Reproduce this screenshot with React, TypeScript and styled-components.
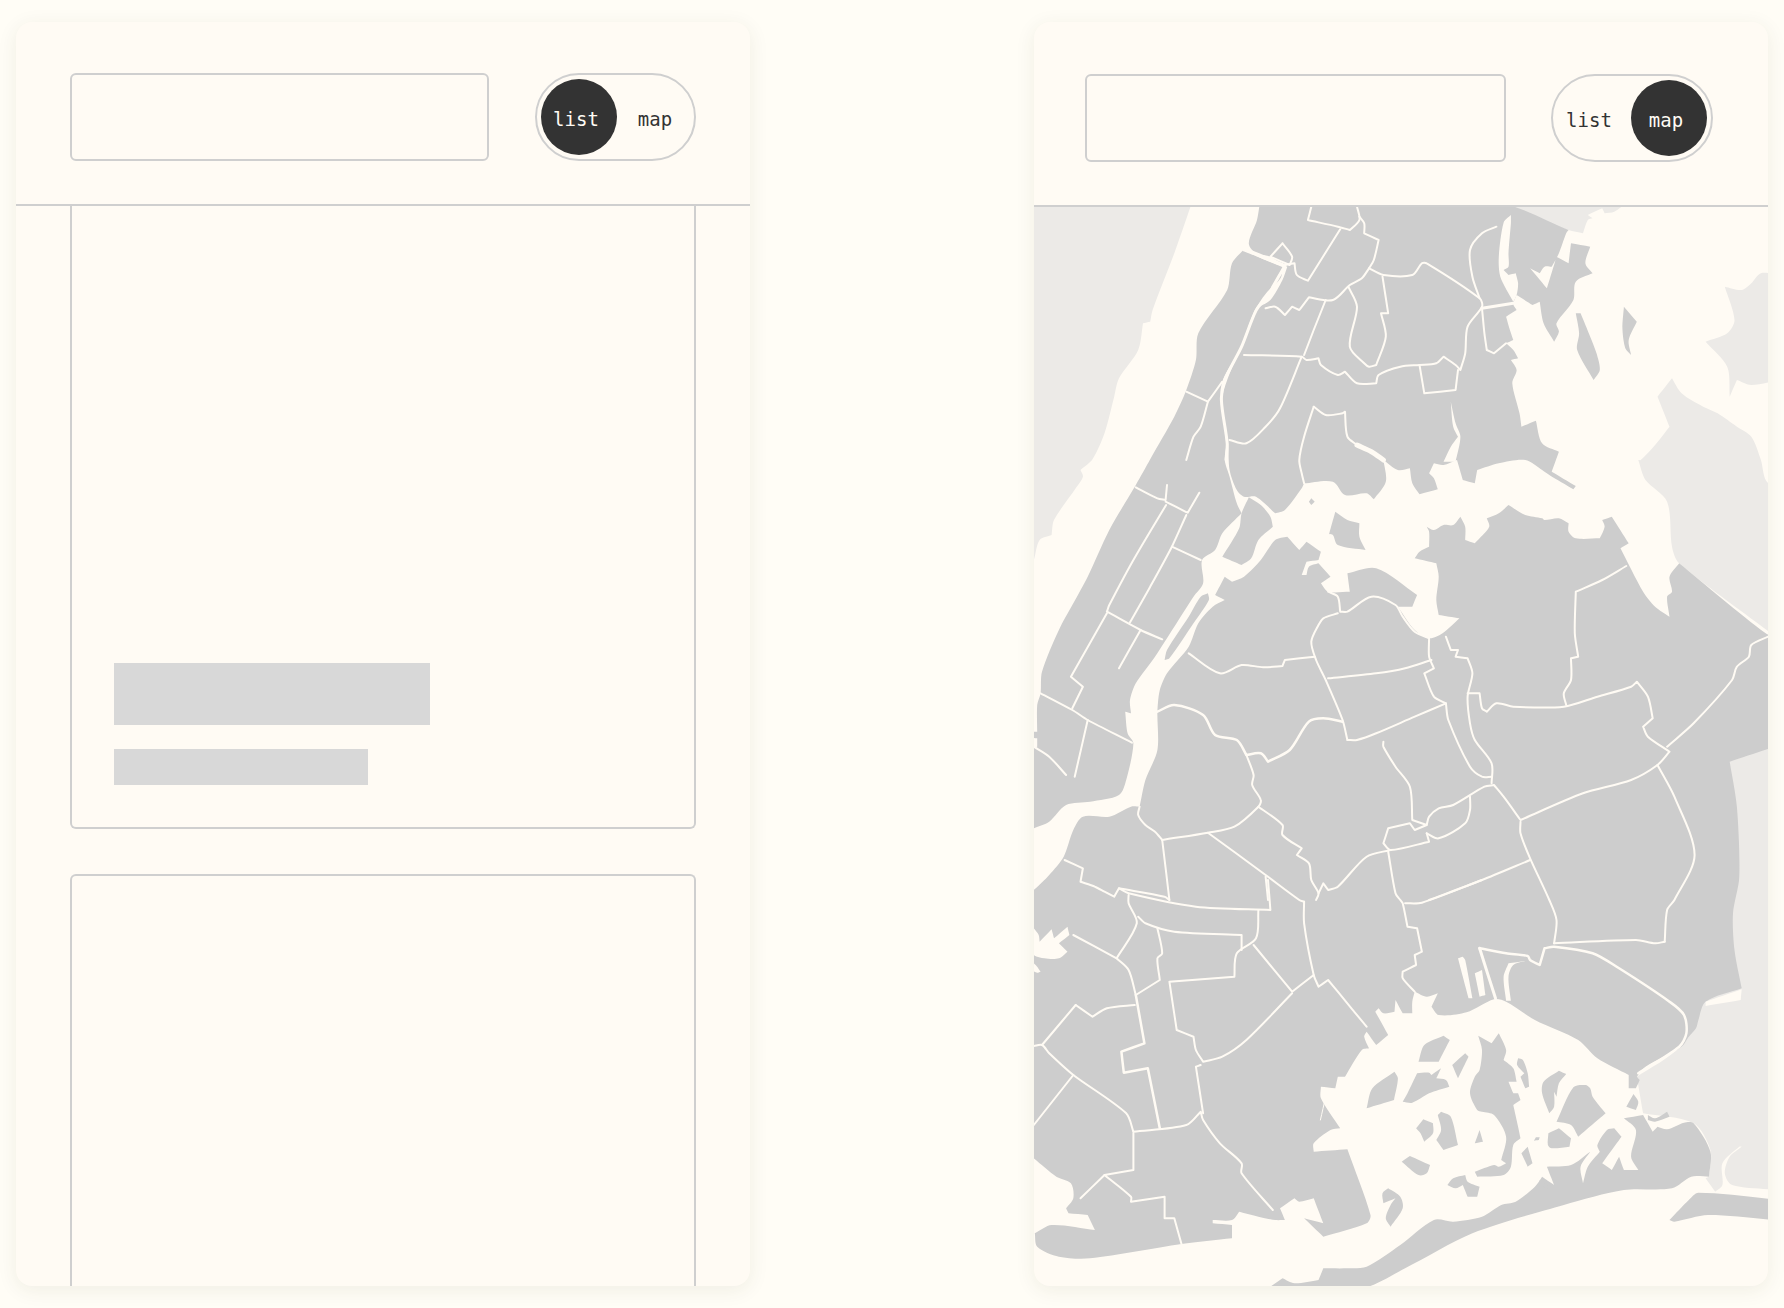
import React from "react";
import styled, { createGlobalStyle } from "styled-components";

const GlobalStyle = createGlobalStyle`
  html, body { margin: 0; padding: 0; background: #fffdf6; }
  #root { width: 1784px; height: 1308px; overflow: hidden; }
`;

const BG = "#fffbf4";
const LINE = "#cfcfcf";

const Page = styled.main`
  width: 1784px;
  height: 1308px;
  box-sizing: border-box;
  padding: 22px 16px;
  display: flex;
  justify-content: space-between;
  background: #fffdf6;
`;

const Phone = styled.section`
  width: 734px;
  height: 1264px;
  display: flex;
  flex-direction: column;
  overflow: hidden;
  border-radius: 16px;
  background: ${BG};
  box-shadow: 0 4px 20px rgba(70, 60, 30, 0.08);
`;

const Header = styled.header<{ $top: number; $left: number; $right: number; $gap: number }>`
  flex: none;
  box-sizing: border-box;
  height: ${(p) => p.$top + 88 + 45}px;
  padding: ${(p) => p.$top}px ${(p) => p.$right}px 0 ${(p) => p.$left}px;
  display: flex;
  gap: ${(p) => p.$gap}px;
  border-bottom: 2px solid ${LINE};
`;

const SearchBox = styled.div`
  flex: 1;
  height: 88px;
  box-sizing: border-box;
  border: 2px solid ${LINE};
  border-radius: 6px;
`;

const Toggle = styled.div<{ $end?: boolean }>`
  flex: none;
  width: ${(p) => (p.$end ? 162 : 161)}px;
  height: 88px;
  box-sizing: border-box;
  padding: 4px;
  display: flex;
  justify-content: ${(p) => (p.$end ? "flex-end" : "flex-start")};
  border: 2px solid ${LINE};
  border-radius: 44px;
`;

const Segment = styled.span<{ $active?: boolean; $shift: number }>`
  width: 76px;
  height: 76px;
  flex: none;
  display: flex;
  align-items: center;
  justify-content: center;
  padding: 3px ${(p) => p.$shift}px 0 0;
  box-sizing: border-box;
  border-radius: 50%;
  font-family: "DejaVu Sans Mono", "Liberation Mono", monospace;
  font-size: 19px;
  color: ${(p) => (p.$active ? "#fffbf4" : "#333333")};
  background: ${(p) => (p.$active ? "#333333" : "transparent")};
`;

const List = styled.div`
  flex: 1;
  min-height: 0;
  padding: 0 54px;
  display: flex;
  flex-direction: column;
  gap: 45px;
`;

const ListCard = styled.article<{ $first?: boolean }>`
  box-sizing: border-box;
  border: 2px solid ${LINE};
  border-radius: 6px;
  ${(p) =>
    p.$first
      ? `height: 623px; flex: none; border-top: 0; border-top-left-radius: 0; border-top-right-radius: 0; padding: 0 42px 42px; display: flex; flex-direction: column; justify-content: flex-end; gap: 24px;`
      : `flex: 1; border-bottom: 0; border-bottom-left-radius: 0; border-bottom-right-radius: 0;`}
`;

const Bar = styled.div<{ $w: number; $h: number }>`
  width: ${(p) => p.$w}px;
  height: ${(p) => p.$h}px;
  background: #d8d8d8;
`;

const MapPane = styled.div`
  flex: 1;
  min-height: 0;
`;

const MapSvg = styled.svg`
  display: block;
  width: 734px;
  height: 1079px;
`;

type Pt = [number, number];
const sx = 2.0796;
const zone = (oy: number) => (s: string): Pt[] =>
  s
    .trim()
    .split(/\s+/)
    .map((p) => {
      const [a, b] = p.split(",").map(Number);
      return [1030 + a / sx, oy + b / 3] as Pt;
    });
const Z2 = zone(0);
const Z3 = zone(460);
const Z4 = zone(880);

const unit = (a: Pt, b: Pt): Pt => {
  const dx = b[0] - a[0], dy = b[1] - a[1];
  const l = Math.hypot(dx, dy) || 1;
  return [dx / l, dy / l];
};

const isCorner = (a: Pt, b: Pt, c: Pt) => {
  const u = unit(a, b), v = unit(b, c);
  return u[0] * v[0] + u[1] * v[1] < 0.55;
};

const smooth = (pts: Pt[], closed: boolean): string => {
  const n = pts.length;
  const at = (i: number) => (closed ? pts[(i + n) % n] : pts[Math.max(0, Math.min(n - 1, i))]);
  let d = `M${pts[0][0].toFixed(1)} ${pts[0][1].toFixed(1)}`;
  const last = closed ? n : n - 1;
  const k = 0.28;
  for (let i = 0; i < last; i++) {
    const p0 = at(i - 1), p1 = at(i), p2 = at(i + 1), p3 = at(i + 2);
    const len = Math.hypot(p2[0] - p1[0], p2[1] - p1[1]) * k;
    const t1 = isCorner(p0, p1, p2) ? unit(p1, p2) : unit(p0, p2);
    const t2 = isCorner(p1, p2, p3) ? unit(p1, p2) : unit(p1, p3);
    const c1x = p1[0] + t1[0] * len, c1y = p1[1] + t1[1] * len;
    const c2x = p2[0] - t2[0] * len, c2y = p2[1] - t2[1] * len;
    d += `C${c1x.toFixed(1)} ${c1y.toFixed(1)} ${c2x.toFixed(1)} ${c2y.toFixed(1)} ${p2[0].toFixed(1)} ${p2[1].toFixed(1)}`;
  }
  return d + (closed ? "Z" : "");
};

const lightLand: Pt[][] = [
  [...Z2("8,615 335,615 300,760 255,930 250,965 235,970 225,1050 185,1135 175,1190 155,1300 130,1378"), ...Z3("105,30 110,50 95,85 50,180 45,225 20,240 8,300 -20,400 -20,0"), ...Z2("-20,615")],
  Z2("950,615 1120,690 1150,700 1160,660 1170,655 1160,645 1190,625 1195,640 1215,635 1235,615"),
  Z2("1560,825 1520,820 1500,850 1480,870 1445,860 1465,960 1450,1000 1405,1025 1450,1100 1455,1190 1470,1140 1500,1155 1560,1140"),
  [...Z2("1270,1380 1300,1335 1330,1280 1305,1190 1335,1135 1355,1180 1400,1220 1430,1240 1470,1280 1500,1310 1520,1380"), ...Z3("1530,60 1560,110 1560,540 1350,310 1335,260 1325,125 1280,60 1265,0")],
  [...Z3("1560,845 1450,905 1450,1250"), ...Z4("1450,100 1470,325 1380,370 1350,500 1262,590 1275,700 1380,730 1415,810 1412,890 1405,895 1425,935 1440,915 1440,850 1475,800 1480,800 1455,830 1445,880 1460,915 1560,930")],
];

const darkLand: Pt[][] = [
  // Bronx and southern Westchester
  [
    ...Z2("478,610 472,660 455,730 470,760 500,770 525,795 535,800 525,840 500,900 470,930 445,1020 410,1140 400,1200 412,1330"),
    ...Z3("415,30 430,90 445,110 470,110 510,160 530,150 565,85 570,70 630,65 655,105 700,100 715,118 740,65 735,0 765,30 790,25 795,70 810,103 848,88 840,55 830,40 840,10 860,15 888,0 900,60 925,70 930,30 975,10 1030,0 1065,30 1080,45 1130,88 1135,78 1085,35"),
    ...Z2("1100,1355 1065,1330 1052,1262 1022,1280 1018,1240 1003,1150 1012,1110 1000,1080 1015,1075 1005,1050 990,1030 1005,1020 998,990 990,950 1012,930 1005,912 1012,885 1045,915 1060,905 1068,970 1090,1025 1100,995 1095,970 1130,900 1135,845 1170,820 1155,790 1165,740 1125,730 1120,790 1095,770 1075,865 1055,830 1040,805 1060,820 1070,800 1085,800 1100,760 1115,700 1120,690 975,610"),
  ],
  // Manhattan
  [
    ...Z2("445,748 420,790 410,870 350,1000 345,1080 325,1170 300,1250 250,1378"),
    ...Z3("220,75 165,210 120,350 90,430 60,510 25,635 22,700 15,735 15,815 -10,815 -10,832 15,835 15,860 -10,872 -10,1115 8,1105 40,1085 75,1035 125,1025 185,1005 200,960 215,850 203,820 198,755 210,760 208,720 220,670 260,590 300,500 340,410 360,370 358,300 385,270 400,220 440,160 430,130 415,50 405,0"),
    ...Z2("408,1330 397,1200 401,1140 436,1050 466,935 491,880 521,835 526,800 470,768"),
  ],
  Z3("455,112 480,135 500,170 505,200 475,240 460,295 440,315 400,290 435,205 440,160"),
  Z3("635,155 660,180 685,190 685,230 698,270 640,255 630,225 622,222"),
  Z3("585,115 592,125 585,135 580,125"),
  Z3("370,400 372,420 340,490 290,595 280,600 285,570 330,470 355,410"),
  Z2("1235,920 1262,965 1245,1020 1250,1065 1238,1045 1232,985"),
  Z2("1135,940 1145,940 1165,1010 1178,1060 1185,1110 1172,1140 1138,1050 1142,1000"),
  // Brooklyn and Queens
  [
    ...Z3("265,755 270,690 285,640 330,560 350,490 380,440 405,420 385,405 405,350 420,365 445,350 480,300 510,240 535,230 560,270 575,245 605,275 600,300 575,305 565,345 575,345 580,320 600,310 625,350 605,370 620,395 665,395 660,340 720,325 805,405 795,440 765,440 800,510 830,535 858,520 893,475 850,465 845,420 850,350 845,310 800,295 810,275 830,260 830,215 825,200 840,210 860,195 880,195 895,170 905,200 905,240 925,250 935,235 955,200 950,175 975,160 995,135 1030,165 1065,175 1070,180 1100,175 1120,190 1120,215 1135,235 1185,235 1195,200 1190,180 1210,170 1245,250 1228,265 1275,395 1300,440 1330,470 1325,410 1335,395 1330,350 1350,310 1530,520 1560,530 1560,855 1455,905 1470,1040 1475,1250"),
    ...Z4("1462,100 1465,210 1480,325 1405,365 1390,420 1385,445 1370,470 1355,500 1280,560 1262,590 1268,600 1260,625 1245,625 1245,585 1180,535 1140,480 1050,420 990,365 965,358 908,397 850,405 835,380 848,340 825,350 800,335 795,365 795,400 775,400 760,360 758,395 735,400 725,385 718,395 745,465 720,495 700,455 695,470 705,505 690,510 655,590 640,590 635,625 605,620 605,655 645,745 625,750 590,790 590,815 660,808 708,1005 700,1030 610,1070 570,1015 610,1030 590,955 560,965 550,955 520,985 530,1020 510,1020 475,1010 435,995 420,1020 380,1020 380,1030 420,1035 420,1075 315,1092 125,1135 60,1130 15,1100 10,1060 45,1035 135,1050 120,1005 80,1000 75,985 90,955 85,910 55,890 8,835 -20,800 -20,0"),
    ...Z3("-20,1320 8,1290 40,1245 70,1190 90,1110 110,1070 165,1070 210,1040 228,1040 240,960 265,870"),
  ],
  // Rockaway
  Z4("1412,890 1415,815 1380,730 1360,728 1325,748 1305,740 1295,755 1275,705 1235,715 1260,750 1250,830 1265,870 1235,870 1225,830 1210,870 1190,850 1205,820 1230,770 1215,745 1200,750 1180,795 1185,815 1160,860 1150,910 1145,860 1165,815 1125,855 1075,860 1090,915 1065,890 1050,920 1010,965 980,975 940,1010 880,1025 840,1020 770,1095 700,1160 660,1165 610,1165 600,1200 550,1210 525,1195 495,1225 690,1225 780,1165 920,1060 1110,975 1235,930 1335,925 1375,890"),
  Z4("1560,960 1390,938 1370,960 1330,1020 1340,1025 1410,1005 1560,1022"),
  // Jamaica Bay islands
  Z4("860,467 873,480 850,545 808,545 820,495"),
  Z4("905,520 912,530 890,595 878,555"),
  Z4("758,575 765,595 757,660 700,685 712,625"),
  Z4("855,565 845,595 865,600 872,620 830,640 795,668 775,665 785,640 805,580 830,578 835,585"),
  Z4("932,467 960,490 975,460 990,510 985,540 1005,565 1012,605 995,605 1005,640 1015,640 1020,660 1005,675 1015,740 1020,775 1005,795 1000,860 985,885 930,890 925,875 965,855 975,860 990,850 980,840 990,770 965,705 940,695 930,690 915,640 925,590 935,570 940,510"),
  Z4("1015,535 1025,540 1035,580 1038,620 1030,625 1020,590 1028,580 1013,555"),
  Z4("1100,572 1115,582 1100,610 1095,650 1090,635 1090,680 1080,700 1065,640 1068,605"),
  Z4("1130,622 1155,615 1165,625 1170,650 1197,700 1140,770 1125,735 1095,725"),
  Z4("1100,745 1125,775 1122,800 1085,805 1077,795 1078,760"),
  Z4("855,695 875,710 890,795 860,810 845,780 855,750 848,705"),
  Z4("818,718 838,730 838,760 820,785 812,760 803,745"),
  Z4("935,750 942,785 925,790"),
  Z4("790,828 832,855 825,880 808,885 773,845"),
  Z4("1035,800 1045,850 1035,860 1022,820"),
  Z4("1052,772 1060,772 1058,780 1048,782"),
  Z4("905,885 910,905 935,920 930,950 910,950 900,915 885,925 868,915 880,895"),
  Z4("1060,900 1075,915 1080,930 1060,915"),
  Z4("1255,642 1265,665 1260,690 1240,680"),
  Z4("745,925 770,950 775,985 750,1040 740,1015 750,975 760,955 735,970 733,940"),
  Z4("1285,705 1300,715 1325,695 1330,710 1300,725 1285,720"),
];

const water: Pt[][] = [
  Z2("1000,645 985,668 975,770 978,830 1005,905 1012,885 1015,850 1010,820 995,825 985,810 995,800 995,760 1000,670"),
  Z4("8,145 18,165 20,185 45,148 50,175 78,140 82,165 60,190 78,215 60,235 30,235 8,225 -10,190"),
  Z4("-10,250 8,250 22,275 15,278 -10,262"),
  Z4("1405,365 1480,328 1478,360 1405,378"),
  Z4("890,235 900,230 905,240 920,355 912,355"),
  Z4("925,280 940,270 947,345 935,350"),
  Z4("1030,243 995,250 985,290 990,362 1000,362 995,290 1005,255"),
  Z2("875,1205 880,1280 890,1310 875,1340 860,1385 885,1385 895,1310 885,1270"),
];

const lines: [Pt[], number][] = [
  // Harlem River
  [Z2("530,797 495,885 470,932 440,1040 405,1140 398,1200 410,1330 408,1380"), 3],
  [Z2("445,748 470,762 525,795"), 4],
  // Bronx
  [Z2("585,620 578,660 640,680 665,690 685,660 680,620"), 2],
  [Z2("685,650 695,670 695,700 725,720 715,780 705,805 735,825 795,825 815,790 825,790 935,895 940,920 910,980 905,1060 895,1110 885,1095 860,1070 845,1090 810,1095 770,1100 725,1125 720,1150 680,1150 655,1115 640,1125 605,1095 600,1075 575,1080 565,1070 445,1065"), 2],
  [Z2("645,688 578,842 555,825 550,790 530,795"), 2],
  [Z2("525,730 545,770 540,795 500,770 525,730"), 2],
  [Z2("705,805 690,835 665,855 630,900 580,892 560,930 545,920 530,945 510,920 490,925"), 2],
  [Z2("615,900 590,990 570,1065"), 2],
  [Z2("662,860 680,920 665,1040 695,1090 705,1100 720,1095 740,1010 730,940 745,940 733,830"), 2],
  [Z2("810,1095 820,1180 885,1170 890,1110"), 2],
  [Z2("970,680 940,700 915,750 920,830 935,895"), 2],
  [Z2("940,925 1005,910"), 3],
  [Z2("940,925 945,1000 950,1050 965,1060 990,1030"), 2],
  [Z2("325,1175 370,1205 400,1145"), 2],
  [Z2("370,1205 355,1280 340,1310 325,1380"), 2],
  [Z2("415,1320 450,1330 490,1280 520,1225 565,1070"), 2],
  [Z2("590,1220 615,1245 650,1240 655,1235 660,1310 680,1335"), 2],
  [[...Z2("680,1335 710,1355 735,1380")], 5],
  [[...Z2("590,1220 570,1310 560,1380"), ...Z3("565,40 570,70")], 2],
  // Manhattan
  [Z3("220,82 265,115 282,120 285,75"), 2],
  [Z3("282,125 328,158 352,98"), 2],
  [Z3("283,135 215,300 165,435 160,455 230,510 275,538"), 2],
  [Z3("325,165 295,260 250,380 208,487"), 2],
  [Z3("295,260 355,300"), 2],
  [Z3("230,510 185,625"), 2],
  [Z3("160,460 85,650 110,680 88,745"), 2],
  [Z3("22,700 88,750 120,780 212,848"), 2],
  [Z3("120,780 93,950"), 2],
  [Z3("8,860 40,890 75,945"), 2],
  // Queens, Brooklyn
  [Z3("330,580 395,640 440,615 485,622 525,618 530,600 592,590"), 2],
  [Z3("640,460 610,475 600,495 585,545 595,600 615,660 650,780 660,840"), 2],
  [Z3("835,600 780,625 720,640 620,655"), 2],
  [Z3("620,395 640,410 645,455 660,455 710,410 760,435 775,470 800,515 830,535 830,590 840,625 820,640 840,710 865,730 800,770 720,820 680,840 660,840"), 2],
  [Z3("265,755 300,735 360,765 385,825 430,840 450,885 480,880 495,905 540,870 580,785 610,775 650,785"), 2.5],
  [Z3("450,885 465,945 462,975 480,1020 475,1040 425,1100 370,1118 275,1140 260,1115 240,1095 225,1065 228,1040"), 2],
  [Z3("475,1040 525,1095 525,1125 565,1165 555,1185 580,1210 585,1260 600,1300 595,1320"), 2],
  [[...Z3("370,1118 490,1245 560,1320"), ...Z4("570,65")], 2],
  [Z3("865,530 875,570 890,570 885,590 910,595 920,640 910,710 915,790 925,840 960,910 960,970"), 2],
  [Z3("865,730 870,780 915,920 940,950 960,950"), 2],
  [Z3("910,700 935,700 940,745 950,755 970,730 1005,740 1110,740 1180,710 1250,680 1262,665 1285,710 1295,775 1275,800 1285,830 1330,875 1305,915 1250,960 1150,1000 1020,1080 985,1010 965,975 945,980 880,1035 850,1045 830,1070 825,1095 795,1080 790,980 760,920 735,860 735,845"), 2],
  [[...Z3("1020,1085 1020,1120 1040,1195 1080,1320"), ...Z4("1095,120 1090,190")], 2],
  [Z3("1040,1200 940,1260 830,1320"), 2],
  [Z3("1115,735 1110,700 1125,660 1125,595 1140,590 1133,520 1135,395 1190,360 1240,318"), 2],
  [[...Z3("1305,915 1340,1010 1382,1185 1340,1320"), ...Z4("1325,90 1320,185")], 2],
  [Z3("1325,860 1380,790 1460,660 1470,620 1495,590 1500,555 1535,530"), 2],
  [Z3("915,1010 915,1050 905,1090 850,1135 825,1120"), 2],
  [Z3("825,1095 800,1110 790,1090 745,1105 735,1150 750,1170 830,1145 825,1120"), 2],
  [Z3("750,1170 700,1190 640,1280 620,1290 610,1270 600,1300"), 2],
  [[...Z3("745,1175 760,1300 770,1320"), ...Z4("775,70 785,140 805,145 815,215 800,225 803,255 775,275 775,295 800,335")], 2],
  [Z3("490,1250 495,1320"), 2],
  [Z3("72,1200 110,1225 105,1265 135,1280 155,1295 175,1310 185,1285 280,1310 290,1320"), 2],
  [Z3("275,1140 290,1320"), 2],
  [Z4("185,25 205,40 345,80 500,90 495,0"), 2],
  [Z4("205,45 205,70 222,130 180,235 90,165"), 2],
  [Z4("225,110 240,130 300,155 440,165 440,210"), 2],
  [Z4("265,145 275,220 265,235 270,300 220,345"), 2],
  [Z4("475,90 470,175 430,220 425,290 290,305 305,450 340,470 345,510 360,545 400,530 450,480 545,340"), 2],
  [Z4("465,195 545,335 590,285"), 2],
  [Z4("570,65 570,130 590,285 600,320 620,300 640,335 700,440"), 2],
  [Z4("220,345 238,490 190,515 195,578 245,565 270,745"), 2.5],
  [Z4("95,375 130,410 160,385 218,375"), 2],
  [Z4("8,498 25,495 40,520 90,585 200,700 215,755"), 2],
  [Z4("95,375 25,495"), 2],
  [Z4("90,585 8,735"), 2],
  [Z4("180,235 205,270 220,345"), 2],
  [Z4("215,755 325,735 355,695 360,720 395,790 440,850 440,880 505,990"), 2],
  [Z4("355,555 345,560 360,700"), 2],
  [Z4("215,760 215,870 155,885 210,950 210,965 280,950 280,1015 300,1015 315,1092"), 2],
  [Z4("155,885 105,955"), 2],
  [Z4("780,70 815,68 940,0"), 2],
  [Z4("1090,190 1260,180 1300,190 1320,185"), 2],
  [Z4("935,205 990,220 1035,228 1040,240 1060,255 1070,205 1090,200 1170,220 1225,265 1330,365 1360,405 1365,460 1350,500 1265,580"), 2.5],
  [Z4("935,205 968,355"), 3],
  [Z4("615,650 604,720"), 1],
];

const NycMap = () => (
  <MapSvg viewBox="1034 207 734 1079">
    <g fill="#ecEAe7">
      {lightLand.map((p, i) => (
        <path key={i} d={smooth(p, true)} />
      ))}
    </g>
    <g fill="#cdcdcd">
      {darkLand.map((p, i) => (
        <path key={i} d={smooth(p, true)} />
      ))}
    </g>
    <g fill={BG}>
      {water.map((p, i) => (
        <path key={i} d={smooth(p, true)} />
      ))}
    </g>
    <g fill="none" stroke={BG} strokeLinecap="round" strokeLinejoin="round">
      {lines.map(([p, w], i) => (
        <path key={i} d={smooth(p, false)} strokeWidth={w} />
      ))}
    </g>
  </MapSvg>
);

const TopBar = ({ view }: { view: "list" | "map" }) => {
  const isList = view === "list";
  return (
    <Header $top={isList ? 51 : 52} $left={isList ? 54 : 51} $right={isList ? 54 : 55} $gap={isList ? 46 : 45}>
      <SearchBox />
      <Toggle $end={!isList}>
        <Segment $active={isList} $shift={isList ? 6 : 8}>list</Segment>
        <Segment $active={!isList} $shift={isList ? 0 : 6}>map</Segment>
      </Toggle>
    </Header>
  );
};

export default function App() {
  return (
    <Page>
      <GlobalStyle />
      <Phone>
        <TopBar view="list" />
        <List>
          <ListCard $first>
            <Bar $w={316} $h={62} />
            <Bar $w={254} $h={36} />
          </ListCard>
          <ListCard />
        </List>
      </Phone>
      <Phone>
        <TopBar view="map" />
        <MapPane>
          <NycMap />
        </MapPane>
      </Phone>
    </Page>
  );
}
